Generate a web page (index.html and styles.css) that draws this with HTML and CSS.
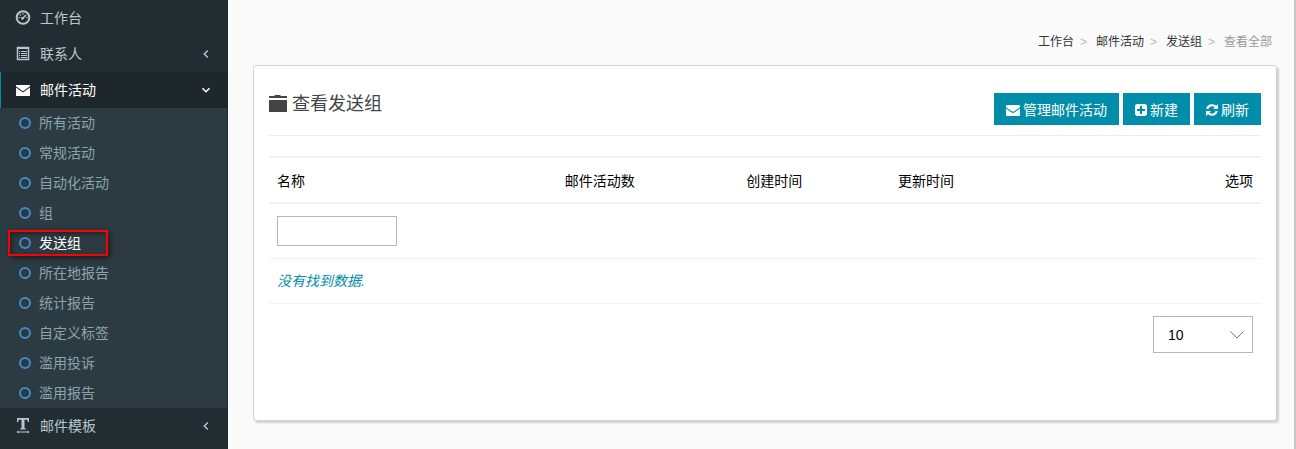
FILE: index.html
```html
<!DOCTYPE html>
<html lang="zh-CN">
<head>
<meta charset="utf-8">
<meta name="viewport" content="width=device-width, initial-scale=1">
<title>查看发送组</title>
<link rel="stylesheet" href="styles.css">
</head>
<body>
<div class="layout">
  <nav class="sidebar">
    <ul class="menu">
      <li><a class="menu-link" href="#">
        <svg class="menu-icon" viewBox="0 0 16 16" fill="none" stroke="currentColor"><circle cx="8" cy="7.500" r="6.300" stroke-width="2"/><path d="M7.300 8.700 11 5" stroke-width="1.500"/><circle cx="7.400" cy="8.300" r="1.400" fill="currentColor" stroke="none"/><path d="M3.500 7.500h1.500M11 7.500h1.500M4.800 4.500l1 1M8 3v1.500" stroke-width="1.200"/></svg>
        <span>工作台</span></a></li>
      <li><a class="menu-link" href="#">
        <svg class="menu-icon" viewBox="0 0 16 16" fill="none" stroke="currentColor"><path d="M2.500 1.500h11v12h-11z" stroke-width="1.500"/><path d="M2 2h12" stroke-width="2"/><path d="M4 5.500h1M4 7.500h1M4 9.500h1M4 11.500h1M6 5.500h6M6 7.500h6M6 9.500h6M6 11.500h6"/></svg>
        <span>联系人</span>
        <svg class="chevron" viewBox="0 0 10 10"><path d="M6.800 1.500 3.300 5l3.500 3.500"/></svg></a></li>
      <li><a class="menu-link menu-link-open" href="#">
        <svg class="menu-icon" viewBox="0 0 16 16" fill="currentColor"><path d="M1 3h14v1.200L8 9.200 1 4.200z"/><path d="M1 5.500 8 10.500l7-5V14H1z"/></svg>
        <span>邮件活动</span>
        <svg class="chevron" viewBox="0 0 10 10"><path d="M1.500 3.300 5 6.800l3.500-3.500"/></svg></a>
        <ul class="submenu">
          <li><a class="submenu-link" href="#">所有活动</a></li>
          <li><a class="submenu-link" href="#">常规活动</a></li>
          <li><a class="submenu-link" href="#">自动化活动</a></li>
          <li><a class="submenu-link" href="#">组</a></li>
          <li class="marked"><a class="submenu-link submenu-link-active" href="#">发送组</a></li>
          <li><a class="submenu-link" href="#">所在地报告</a></li>
          <li><a class="submenu-link" href="#">统计报告</a></li>
          <li><a class="submenu-link" href="#">自定义标签</a></li>
          <li><a class="submenu-link" href="#">滥用投诉</a></li>
          <li><a class="submenu-link" href="#">滥用报告</a></li>
        </ul></li>
      <li><a class="menu-link" href="#">
        <svg class="menu-icon" viewBox="0 0 16 16" fill="currentColor"><path d="M2 0h12v4h-1.200L12.300 1.800H9.500v8.400l1.500.5v.8H5v-.8l1.500-.5V1.800H3.700L3.200 4H2z"/><path d="M1.500 14l2-1.600v1h9v-1l2 1.600-2 1.600v-1h-9v1z"/></svg>
        <span>邮件模板</span>
        <svg class="chevron" viewBox="0 0 10 10"><path d="M6.800 1.500 3.300 5l3.500 3.500"/></svg></a></li>
    </ul>
  </nav>
  <main class="content">
    <ol class="breadcrumb">
      <li><a href="#">工作台</a></li>
      <li><a href="#">邮件活动</a></li>
      <li><a href="#">发送组</a></li>
      <li class="current">查看全部</li>
    </ol>
    <section class="card">
      <header class="card-header">
        <h1 class="card-title">
          <svg class="title-icon" viewBox="0 0 18 18" fill="currentColor"><path d="M0 1h5l1-1h5l1 1h6v2H0z"/><path d="M0 5h18v12H0z"/></svg>
          查看发送组</h1>
        <div class="actions">
          <button class="button" type="button"><svg class="icon-wide" viewBox="0 0 14 14" fill="currentColor"><path d="M0 3.200C0 2.400.5 2 1.200 2h11.600c.7 0 1.200.4 1.200 1.200 0 .7-.5 1.400-1 1.800L8.300 8.300c-.9.6-1.700.6-2.600 0L1 5C.5 4.600 0 3.900 0 3.200z"/><path d="M0 5.500 5.200 9.200c1.200.9 2.400.9 3.600 0L14 5.500v6.200c0 .7-.5 1.300-1.200 1.300H1.200C.5 13 0 12.400 0 11.700z"/></svg>管理邮件活动</button>
          <button class="button" type="button"><svg class="icon-narrow" viewBox="0 0 12 14" fill="currentColor"><path fill-rule="evenodd" d="M2.200 1h7.600C11 1 12 2 12 3.200v7.600C12 12 11 13 9.800 13H2.200C1 13 0 12 0 10.800V3.200C0 2 1 1 2.200 1zM5 3v3H2v2h3v3h2V8h3V6H7V3z"/></svg>新建</button>
          <button class="button" type="button"><svg class="icon-narrow" viewBox="0 0 12 14" fill="none" stroke="currentColor" stroke-width="2.200"><path d="M1.200 6A5 5 0 0 1 9.800 4"/><path d="M10.800 8A5 5 0 0 1 2.200 10"/><path d="M12 1v5H7zM0 13V8h5z" fill="currentColor" stroke="none"/></svg>刷新</button>
        </div>
      </header>
      <table class="grid">
        <colgroup><col class="col-name"><col class="col-count"><col class="col-created"><col></colgroup>
        <colgroup><col class="col-options"></colgroup>
        <thead>
          <tr><th scope="col">名称</th><th scope="col">邮件活动数</th><th scope="col">创建时间</th><th scope="col">更新时间</th><th class="options" scope="col">选项</th></tr>
        </thead>
        <tbody>
          <tr class="filter-row"><td colspan="5"><input class="filter" type="text" aria-label="名称"></td></tr>
          <tr><td class="empty" colspan="5">没有找到数据.</td></tr>
        </tbody>
      </table>
      <div class="pager">
        <select class="page-size" aria-label="每页数量"><option>10</option><option>20</option><option>50</option></select>
      </div>
    </section>
  </main>
</div>
</body>
</html>
```
FILE: styles.css
```css
*, *::before, *::after { box-sizing: border-box; }

body {
  margin: 0;
  background: #fafafa;
  color: #000;
  font: 14px/20px "Liberation Sans", "Noto Sans CJK SC", sans-serif;
}

ul, ol { margin: 0; padding: 0; list-style: none; }
a { color: inherit; text-decoration: none; }

.layout {
  display: flex;
  height: 100vh;
  overflow: hidden;
  border-right: 2px solid #c6c6c6;
}

/* Sidebar */
.sidebar {
  flex: 0 0 228px;
  background: #222d32;
  color: #b8c7ce;
}

.menu-link {
  display: flex;
  align-items: center;
  gap: 9px;
  height: 36px;
  padding: 0 17px 0 12px;
  border-left: 3px solid transparent;
}

.menu-link-open {
  border-left: 1px solid #008daa;
  padding-left: 14px;
  background: #1e282c;
  color: #fff;
}

.menu-icon { width: 16px; height: 16px; }

.chevron {
  width: 10px;
  height: 10px;
  margin-left: auto;
  fill: none;
  stroke: currentColor;
  stroke-width: 1.5;
}

.submenu {
  background: #2c3b41;
  border-right: 1px solid #222d32;
  color: #8aa4af;
}

.submenu-link {
  display: flex;
  align-items: center;
  gap: 8px;
  height: 30px;
  padding-left: 19px;
}

.submenu-link::before {
  content: "";
  width: 12px;
  height: 12px;
  border: 2px solid #428bca;
  border-radius: 50%;
}

.submenu-link-active { color: #fff; }

.marked { position: relative; }

.marked::after {
  content: "";
  position: absolute;
  top: 2px;
  left: 8px;
  width: 100px;
  height: 26px;
  border: 2px solid #f00;
  box-shadow: 2px 2px 5px rgba(0, 0, 0, .5), inset 2px 2px 5px rgba(0, 0, 0, .4);
  pointer-events: none;
}

/* Content */
.content {
  flex: 1;
  min-width: 0;
  padding: 32px 17px 28px 25px;
}

.breadcrumb {
  display: flex;
  justify-content: flex-end;
  margin-bottom: 13px;
  padding-right: 5px;
  color: #333;
  font-size: 12px;
}

.breadcrumb li + li::before {
  content: ">";
  padding: 0 9px 0 6px;
  color: #bbb;
}

.breadcrumb .current { color: #999; }

.card {
  min-height: 356px;
  padding: 15px;
  background: #fff;
  border: 1px solid #d0d2da;
  border-radius: 3px;
  box-shadow: 2px 2px 2px #d0d1d4;
}

.card-header {
  display: flex;
  justify-content: space-between;
  height: 55px;
  margin-bottom: 20px;
  padding-top: 12px;
  border-bottom: 1px solid #eee;
}

.card-title {
  display: flex;
  align-items: center;
  gap: 5px;
  height: 22px;
  margin: 0;
  color: #444;
  font-size: 18px;
  font-weight: 400;
}

.title-icon { width: 18px; height: 18px; }

.actions { display: flex; gap: 4px; }

.button {
  display: flex;
  align-items: center;
  gap: 3px;
  height: 32px;
  padding: 2px 12px 0;
  border: 0;
  background: #008daa;
  color: #fff;
  font: inherit;
}

.icon-wide { width: 14px; height: 14px; }
.icon-narrow { width: 12px; height: 14px; }

.grid {
  width: 100%;
  table-layout: fixed;
  border-collapse: separate;
  border-spacing: 0;
}

.col-name { width: 29%; }
.col-count { width: 18.3%; }
.col-created { width: 15.3%; }
.col-options { width: 10%; }

.grid th {
  padding: 13px 8px 11px;
  border: solid #f2f2f2;
  border-width: 2px 0;
  font-weight: 400;
  text-align: left;
}

.grid .options { text-align: right; }

.grid td {
  padding: 12px 8px;
  border-bottom: 1px solid #f2f2f2;
}

.filter {
  display: block;
  width: 120px;
  height: 30px;
  padding: 4px 8px;
  border: 1px solid #b5b5b5;
  background: #fff;
  font: inherit;
}

.grid .empty {
  color: #008daa;
  font-style: italic;
}

.pager {
  display: flex;
  justify-content: flex-end;
  padding: 12px 8px;
}

.page-size {
  appearance: none;
  width: 100px;
  height: 37px;
  padding: 0 32px 0 14px;
  border: 1px solid #b5b5b5;
  border-radius: 0;
  background: #fff url("data:image/svg+xml,%3Csvg xmlns='http://www.w3.org/2000/svg' width='14' height='8' fill='none' stroke='%23777'%3E%3Cpath d='M.5.5 7 7 13.500.5'/%3E%3C/svg%3E") no-repeat right 8px center;
  color: #000;
  font: inherit;
}
```
